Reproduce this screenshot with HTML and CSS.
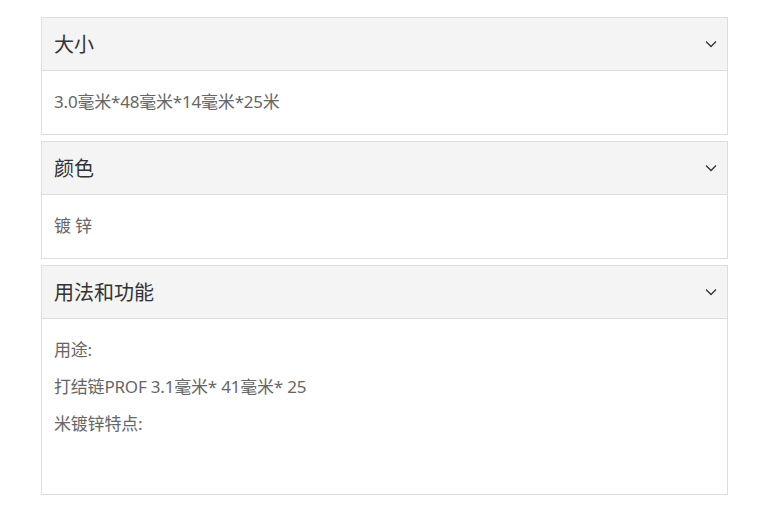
FILE: index.html
```html
<!DOCTYPE html>
<html lang="zh-CN">
<head>
<meta charset="utf-8">
<title>产品参数</title>
<link rel="stylesheet" href="styles.css">
</head>
<body>
<div class="accordion">
  <section class="panel">
    <div class="panel-head">
      <span class="panel-title">大小</span>
      <svg class="chev" width="12" height="8" viewBox="0 0 12 8"><path d="M1 1.5 L6 6.5 L11 1.5" fill="none" stroke="#333" stroke-width="1.3"/></svg>
    </div>
    <div class="panel-body">
      <p>3.0毫米*48毫米*14毫米*25米</p>
    </div>
  </section>
  <section class="panel">
    <div class="panel-head">
      <span class="panel-title">颜色</span>
      <svg class="chev" width="12" height="8" viewBox="0 0 12 8"><path d="M1 1.5 L6 6.5 L11 1.5" fill="none" stroke="#333" stroke-width="1.3"/></svg>
    </div>
    <div class="panel-body">
      <p>镀 锌</p>
    </div>
  </section>
  <section class="panel">
    <div class="panel-head">
      <span class="panel-title">用法和功能</span>
      <svg class="chev" width="12" height="8" viewBox="0 0 12 8"><path d="M1 1.5 L6 6.5 L11 1.5" fill="none" stroke="#333" stroke-width="1.3"/></svg>
    </div>
    <div class="panel-body">
      <p>用途:</p>
      <p>打结链PROF 3.1毫米* 41毫米* 25</p>
      <p>米镀锌特点:</p>
      <p class="blank">&nbsp;</p>
    </div>
  </section>
</div>
</body>
</html>
```
FILE: styles.css
```css
html, body {
  margin: 0;
  padding: 0;
  background: #ffffff;
}
body {
  font-family: "Noto Sans", "Noto Sans CJK SC", sans-serif;
  color: #555;
}
.accordion {
  width: 687px;
  margin: 17px 0 0 41px;
  display: flex;
  flex-direction: column;
  gap: 6px;
}
.panel {
  border: 1px solid #dddddd;
  background: #fff;
}
.panel-head {
  background: #f4f4f4;
  border-bottom: 1px solid #dddddd;
  display: flex;
  align-items: center;
  justify-content: space-between;
  padding: 2px 10px 0 12px;
  box-sizing: border-box;
  height: 53px;
}
.panel-title {
  font-size: 20px;
  color: #333;
  line-height: 24px;
}
.chev {
  display: block;
  margin-top: -3px;
}
.panel-body {
  padding: 19px 12px 7px;
}
.panel-body p {
  margin: 0 0 13px;
  font-size: 17px;
  line-height: 24px;
  color: #666;
  letter-spacing: -0.2px;
}
.panel-body p.blank {
  margin-bottom: 14px;
}
```
